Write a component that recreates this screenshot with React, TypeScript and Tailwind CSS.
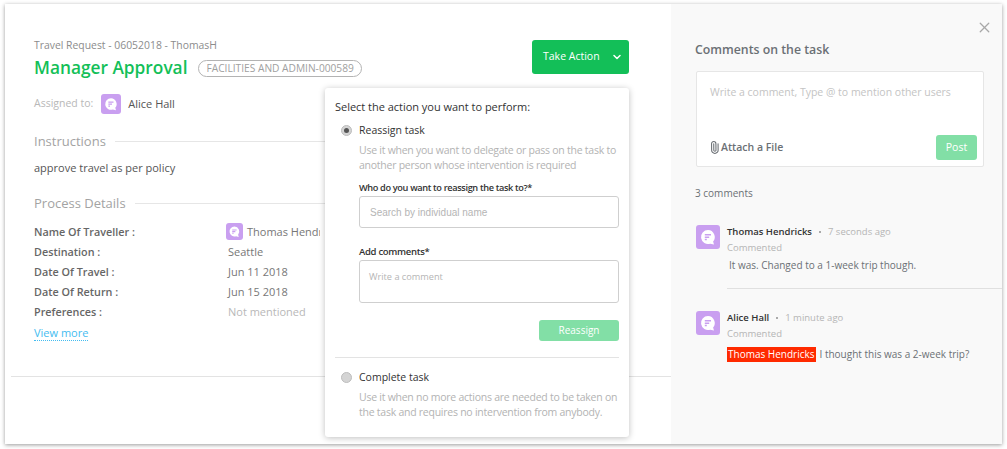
import React from "react";
import { ChevronDown, Paperclip, X } from "lucide-react";

const Avatar = ({ size }: { size: "sm" | "md" | "lg" }) => {
  const box =
    size === "sm"
      ? "w-[17px] h-[17px] rounded-[3px]"
      : size === "md"
        ? "w-5 h-5 rounded-[3px]"
        : "w-6 h-6 rounded-[3px]";
  return (
    <div className={`${box} bg-[#c99ff0] flex items-center justify-center shrink-0`}>
      <svg viewBox="0 0 24 24" className="w-full h-full">
        <path
          d="M12 5a7 7 0 1 0 2.2 13.65L18 19.6l-.9-3.1A7 7 0 0 0 12 5z"
          fill="#ffffff"
        />
        <path
          d="M8.8 9h6.2v1.5H8.8zM8.8 11.4h4.4v1.5H8.8zM8.8 13.8h2v1.5h-2z"
          fill="#c99ff0"
        />
      </svg>
    </div>
  );
};

const details = [
  { label: "Destination :", value: "Seattle" },
  { label: "Date Of Travel :", value: "Jun 11 2018" },
  { label: "Date Of Return :", value: "Jun 15 2018" },
];

const Radio = ({ checked }: { checked?: boolean }) => (
  <div className="w-[11px] h-[11px] rounded-full bg-[#d4d4d4] border border-[#bdbdbd] flex items-center justify-center shrink-0">
    {checked && <div className="w-[5px] h-[5px] rounded-full bg-[#555555]" />}
  </div>
);

const ActionPopover = () => (
  <div className="absolute left-[320px] top-[84px] w-[304px] h-[349px] bg-white rounded-[3px] shadow-[0_1px_6px_rgba(0,0,0,0.25)] pt-[11px] px-[10px] text-[11px] leading-[15px]">
    <div className="text-[#333333] text-[11px] tracking-[-0.02px] leading-[16px] whitespace-nowrap">
      Select the action you want to perform:
    </div>
    <div className="flex items-center mt-[7px] pl-[6px]">
      <Radio checked />
      <span className="ml-[7px] text-[#333333] text-[10.5px] leading-[16px]">Reassign task</span>
    </div>
    <div className="ml-[24px] mt-[5px] text-[#b3b3b3] text-[10.5px] tracking-[-0.25px] leading-[15px] whitespace-nowrap">
      <div>Use it when you want to delegate or pass on the task to</div>
      <div>another person whose intervention is required</div>
    </div>
    <div className="ml-[24px] mt-[7px] text-[#333333] text-[9.2px] tracking-[-0.35px] font-semibold leading-[15px]">
      Who do you want to reassign the task to?*
    </div>
    <div className="ml-[24px] mt-[1px] h-[32px] border border-[#cfcfcf] rounded-[3px] flex items-center pl-[10px] text-[#b5b5b5] text-[10px] font-['Liberation_Sans',sans-serif]">
      Search by individual name
    </div>
    <div className="ml-[24px] mt-[16px] text-[#333333] text-[9.5px] tracking-[-0.3px] font-semibold leading-[15px]">
      Add comments*
    </div>
    <div className="ml-[24px] mt-[1px] h-[43px] border border-[#cfcfcf] rounded-[3px] pl-[9px] pt-[9px] text-[#b5b5b5] text-[9.2px] leading-[13px]">
      Write a comment
    </div>
    <div className="flex justify-end mt-[17px]">
      <div className="w-[80px] h-[21px] rounded-[3px] bg-[#82dfa6] text-white text-[10px] flex items-center justify-center">
        Reassign
      </div>
    </div>
    <div className="border-t border-[#e3e3e3] mt-[16px]" />
    <div className="flex items-center mt-[11px] pl-[6px]">
      <Radio />
      <span className="ml-[7px] text-[#333333] text-[10.5px] leading-[16px]">Complete task</span>
    </div>
    <div className="ml-[24px] mt-[5px] text-[#b3b3b3] text-[10.5px] tracking-[-0.25px] leading-[15px] whitespace-nowrap">
      <div>Use it when no more actions are needed to be taken on</div>
      <div>the task and requires no intervention from anybody.</div>
    </div>
  </div>
);

const SectionTitle = ({ title }: { title: string }) => (
  <div className="flex items-center">
    <span className="text-[#a3a3a3] text-[13px] leading-[20px]">{title}</span>
    <div className="flex-1 border-t border-[#e6e6e6] ml-[9px]" />
  </div>
);

const LeftPanel = () => (
  <div className="relative w-[666px] shrink-0 h-full bg-white">
    <div className="pl-[29px] pr-[42px] pt-[34px]">
      <div className="flex justify-between">
        <div>
          <div className="text-[#8c8c8c] text-[10.4px] leading-[15px]">Travel Request - 06052018 - ThomasH</div>
          <div className="flex items-center mt-[3px]">
            <span className="text-[#13bf58] text-[17.3px] leading-[24px] font-semibold">Manager Approval</span>
            <span className="ml-[11px] mt-[1px] h-[17px] px-[7px] border border-[#b3b3b3] rounded-full text-[#a0a0a0] text-[10.2px] flex items-center whitespace-nowrap">
              FACILITIES AND ADMIN-000589
            </span>
          </div>
        </div>
        <div className="w-[97px] h-[34px] mt-[2px] rounded-[3px] bg-[#13bf58] text-white text-[10.5px] flex items-center justify-between pl-[11px] pr-[6px]">
          <span>Take Action</span>
          <ChevronDown size={12} strokeWidth={3} />
        </div>
      </div>
      <div className="flex items-center mt-[14px]">
        <span className="text-[#b8b8b8] text-[10.5px]">Assigned to:</span>
        <div className="ml-[8px]">
          <Avatar size="md" />
        </div>
        <span className="ml-[7px] text-[#555555] text-[11px]">Alice Hall</span>
      </div>
      <div className="mt-[17px]">
        <SectionTitle title="Instructions" />
      </div>
      <div className="mt-[9px] text-[#555555] text-[11px] leading-[16px]">approve travel as per policy</div>
      <div className="mt-[17px]">
        <SectionTitle title="Process Details" />
      </div>
      <div className="mt-[8px] grid grid-cols-[194px_1fr] auto-rows-[20px] items-center text-[11px] leading-[15px]">
        <div className="font-semibold text-[#666666] text-[10.8px]">Name Of Traveller :</div>
        <div className="flex items-center text-[#777777] -ml-[2px] w-[94px] overflow-hidden">
          <Avatar size="sm" />
          <span className="ml-[4px] whitespace-nowrap">Thomas Hendricks</span>
        </div>
        {details.map((row) => (
          <React.Fragment key={row.label}>
            <div className="font-semibold text-[#666666] text-[10.8px]">{row.label}</div>
            <div className="text-[#777777]">{row.value}</div>
          </React.Fragment>
        ))}
        <div className="font-semibold text-[#666666] text-[10.8px]">Preferences :</div>
        <div className="text-[#b8b8b8]">Not mentioned</div>
      </div>
      <div className="mt-[4px] w-fit text-[#44bcf0] text-[11px] leading-[15px] border-b border-dotted border-[#44bcf0]">
        View more
      </div>
    </div>
    <div className="ml-[6px] mt-[35px] border-t border-[#e3e3e3]" />
    <ActionPopover />
  </div>
);

const Comment = ({ name, time }: { name: string; time: string }) => (
  <div className="flex">
    <Avatar size="lg" />
    <div className="ml-[7px] flex-1">
      <div className="flex items-center leading-[15px] -mt-[1px]">
        <span className="text-[#333333] text-[9.5px] font-semibold">{name}</span>
        <span className="mx-[7px] w-[2px] h-[2px] bg-[#aaaaaa]" />
        <span className="text-[#b5b5b5] text-[9.5px]">{time}</span>
      </div>
      <div className="text-[#b5b5b5] text-[9.5px] leading-[15px] mt-[1px]">Commented</div>
    </div>
  </div>
);

const RightPanel = () => (
  <div className="relative flex-1 h-full bg-[#f9f9f9] pt-[36px]">
    <X size={17} strokeWidth={1.8} className="absolute right-[9px] top-[15px] text-[#a8a8a8]" />
    <div className="pl-[25px] pr-[18px]">
      <div className="text-[#6b7075] text-[12.3px] font-semibold leading-[20px] -ml-[1px]">Comments on the task</div>
      <div className="mt-[11px] h-[96px] bg-white border border-[#e6e6e6] rounded-[2px] relative flex flex-col justify-between pt-[12px] pl-[13px] pr-[6px] pb-[6px]">
        <div className="text-[#c4c4c4] text-[10.5px] leading-[16px]">Write a comment, Type @ to mention other users</div>
        <div className="flex items-center justify-between">
          <div className="flex items-center text-[#6b7075] text-[10.5px] font-semibold -ml-[2px]">
            <Paperclip size={13} strokeWidth={2} className="-rotate-45" />
            <span>Attach a File</span>
          </div>
          <div className="w-[41px] h-[25px] rounded-[3px] bg-[#82dfa6] text-white text-[10.5px] flex items-center justify-center">
            Post
          </div>
        </div>
      </div>
      <div className="mt-[19px] text-[#6b7075] text-[10px] leading-[15px] -ml-[1px]">3 comments</div>
    </div>
    <div className="pl-[25px] mt-[24px]">
      <Comment name="Thomas Hendricks" time="7 seconds ago" />
      <div className="ml-[33px] mt-[3px] text-[#6b7075] text-[10px] leading-[15px]">
        It was. Changed to a 1-week trip though.
      </div>
      <div className="ml-[31px] mt-[15px] border-t border-[#e0e0e0]" />
      <div className="mt-[22px]">
        <Comment name="Alice Hall" time="1 minute ago" />
      </div>
      <div className="ml-[31px] mt-[6px] flex items-center text-[10px] leading-[15px]">
        <span className="bg-[#ff2a00] text-white px-[1px]">Thomas Hendricks</span>
        <span className="ml-[4px] text-[#6b7075]">I thought this was a 2-week trip?</span>
      </div>
    </div>
  </div>
);

export default function App() {
  return (
    <div className="w-[1007px] h-[449px] bg-white pt-[4px] pl-[5px] font-['Open_Sans',sans-serif]">
      <div className="w-[997px] h-[440px] flex shadow-[0_1px_4px_rgba(0,0,0,0.4)] overflow-hidden">
        <LeftPanel />
        <RightPanel />
      </div>
    </div>
  );
}
